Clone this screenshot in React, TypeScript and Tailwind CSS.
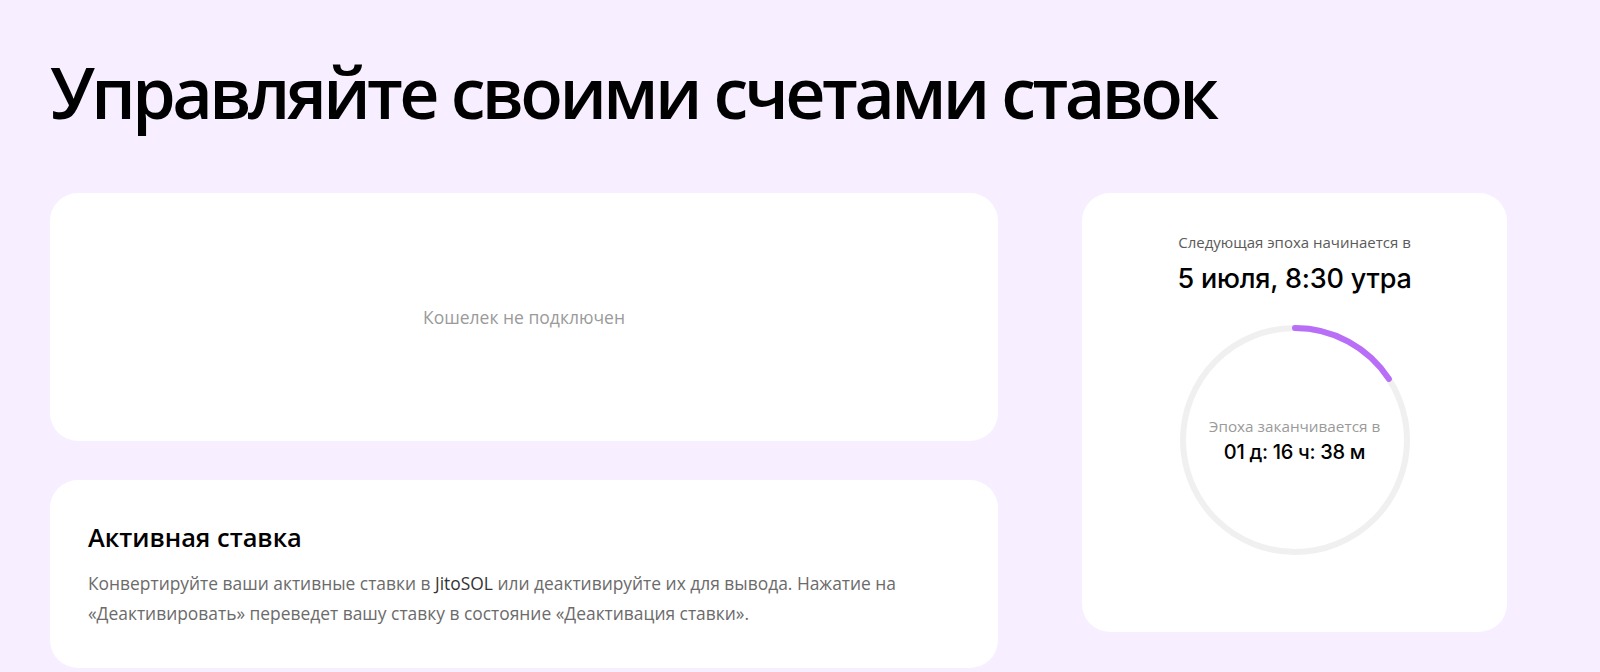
import React from 'react';

const sans = { fontFamily: '"Open Sans", "Noto Sans", sans-serif' };

function EpochRing() {
  const r = 112;
  const c = 2 * Math.PI * r;
  const progress = 0.158;
  return (
    <div className="relative w-[236px] h-[236px]">
      <svg width="236" height="236" viewBox="0 0 236 236" className="absolute inset-0">
        <circle cx="118" cy="118" r={r} fill="none" stroke="#f0f0f0" strokeWidth="6" />
        <circle
          cx="118"
          cy="118"
          r={r}
          fill="none"
          stroke="#b86ef6"
          strokeWidth="6"
          strokeLinecap="round"
          strokeDasharray={`${c * progress} ${c}`}
          transform="rotate(-90 118 118)"
        />
      </svg>
      <div className="absolute inset-0 flex flex-col items-center justify-center">
        <p className="text-[15.3px] leading-[20px] text-[#9a9a9a]" style={sans}>Эпоха заканчивается в</p>
        <p className="mt-[4px] text-[20px] leading-[24px] font-medium text-black tracking-[-0.3px] font-['Inter',sans-serif]">01 д: 16 ч: 38 м</p>
      </div>
    </div>
  );
}

export default function App() {
  return (
    <div className="h-[672px] overflow-hidden bg-[#f7efff] px-[50px] pt-[50px]" style={sans}>
      <h1 className="text-[70px] leading-[84px] font-semibold text-black tracking-[-3.6px] whitespace-nowrap">
        Управляйте своими счетами ставок
      </h1>

      <div className="mt-[59px] flex gap-[84px] items-start">
        <div className="w-[948px] shrink-0 flex flex-col gap-[39px]">
          <div className="h-[248px] bg-white rounded-[28px] flex items-center justify-center">
            <p className="text-[17.5px] text-[#9a9a9a]">Кошелек не подключен</p>
          </div>

          <div className="bg-white rounded-[28px] px-[38px] pt-[40px] pb-[40px]">
            <h2 className="text-[25.4px] leading-[34px] font-semibold text-black">Активная ставка</h2>
            <p className="mt-[14px] text-[17.4px] leading-[30px] text-[#6b6b6b] whitespace-nowrap">
              Конвертируйте ваши активные ставки в <span className="text-[#333]">JitoSOL</span> или деактивируйте их для вывода. Нажатие на
              <br />
              «Деактивировать» переведет вашу ставку в состояние «Деактивация ставки».
            </p>
          </div>
        </div>

        <div className="w-[425px] shrink-0 h-[439px] bg-white rounded-[28px] flex flex-col items-center pt-[40px]">
          <p className="text-[15px] leading-[18px] text-[#5a5a5a]">Следующая эпоха начинается в</p>
          <p className="mt-[14px] text-[27px] leading-[28px] font-medium text-black tracking-[-0.2px] font-['Inter',sans-serif]">5 июля, 8:30 утра</p>
          <div className="mt-[29px]">
            <EpochRing />
          </div>
        </div>
      </div>
    </div>
  );
}
